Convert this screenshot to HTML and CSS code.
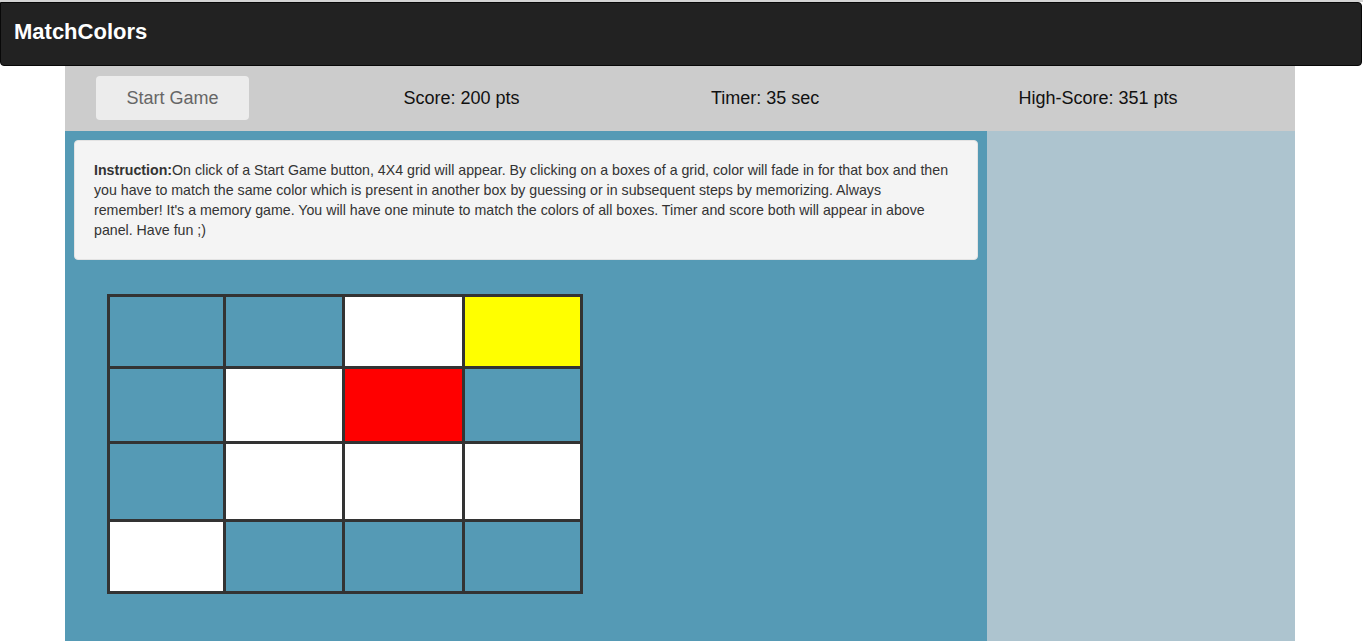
FILE: index.html
```html
<!DOCTYPE html>
<html>
<head>
<meta charset="utf-8">
<title>MatchColors</title>
<link rel="stylesheet" href="styles.css">
</head>
<body>
<div class="topline"></div>
<nav class="navbar">
  <span class="brand">MatchColors</span>
</nav>
<div class="container">
  <div class="panel">
    <div class="panel-cell"><button class="start-btn">Start Game</button></div>
    <div class="panel-cell">Score: 200 pts</div>
    <div class="panel-cell">Timer: 35 sec</div>
    <div class="panel-cell">High-Score: 351 pts</div>
  </div>
  <div class="main">
    <div class="game">
      <div class="well"><b class="label">Instruction:</b>On click of a Start Game button, 4X4 grid will appear. By clicking on a boxes of a grid, color will fade in for that box and then you have to match the same color which is present in another box by guessing or in subsequent steps by memorizing. Always remember! It's a memory game. You will have one minute to match the colors of all boxes. Timer and score both will appear in above panel. Have fun ;)</div>
      <div class="board">
        <div class="box"></div><div class="box"></div><div class="box white"></div><div class="box yellow"></div>
        <div class="box"></div><div class="box white"></div><div class="box red"></div><div class="box"></div>
        <div class="box"></div><div class="box white"></div><div class="box white"></div><div class="box white"></div>
        <div class="box white"></div><div class="box"></div><div class="box"></div><div class="box"></div>
      </div>
    </div>
    <div class="side"></div>
  </div>
</div>
</body>
</html>
```

FILE: styles.css
```css
html, body {
  margin: 0;
  padding: 0;
  background: #ffffff;
  font-family: "Liberation Sans", Arial, sans-serif;
}
.topline {
  height: 2px;
  background: #d4d4d4;
}
.navbar {
  height: 62px;
  margin-right: 1px;
  background: #222222;
  border: 1px solid #080808;
  border-radius: 0 4px 4px 4px;
  display: flex;
  align-items: center;
  padding-left: 13px;
}
.brand {
  color: #ffffff;
  font-weight: bold;
  font-size: 22px;
  margin-top: -5px;
}
.container {
  width: 1230px;
  margin-left: 65px;
}
.panel {
  display: grid;
  grid-template-columns: repeat(4, 307.5px);
  height: 65px;
  background: #cccccc;
}
.panel-cell {
  display: flex;
  align-items: center;
  padding-left: 31px;
  font-size: 18px;
  color: #111111;
}
.start-btn {
  width: 153px;
  height: 44px;
  border: none;
  border-radius: 4px;
  background: #ececec;
  color: #666666;
  font-family: "Liberation Sans", Arial, sans-serif;
  font-size: 18px;
  padding: 0;
  margin-top: -1px;
}
.main {
  display: grid;
  grid-template-columns: 922px 308px;
  min-height: 520px;
}
.game {
  background: #559ab5;
  padding: 9px;
}
.side {
  background: #adc4cf;
}
.well {
  background: #f4f4f4;
  border: 1px solid #e3e3e3;
  border-radius: 4px;
  padding: 19px 27px 19px 19px;
  font-size: 14.2px;
  line-height: 20px;
  color: #333333;
}
.label {
  font-weight: bold;
}
.board {
  display: grid;
  grid-template-columns: 113px 116px 117px 115px;
  grid-template-rows: 69px 72px 75px 69px;
  gap: 3px;
  padding: 3px;
  background: #333333;
  width: max-content;
  margin-top: 34px;
  margin-left: 33px;
}
.box {
  background: #559ab5;
}
.box.white { background: #ffffff; }
.box.yellow { background: #ffff00; }
.box.red { background: #ff0000; }
```
